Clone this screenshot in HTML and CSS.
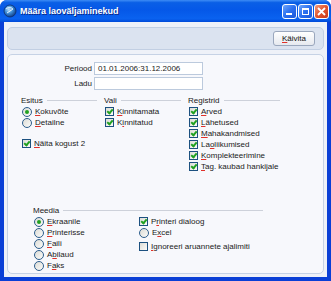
FILE: index.html
```html
<!DOCTYPE html>
<html lang="et">
<head>
  <meta charset="UTF-8">
  <title>Määra laoväljaminekud</title>
  <link rel="stylesheet" href="styles.css">
</head>
<body>
  <div class="window">
    <div class="titlebar">
      <svg class="app-icon" width="14" height="14" viewBox="0 0 14 14">
        <defs>
          <radialGradient id="globe" cx="40%" cy="35%" r="65%">
            <stop offset="0" stop-color="#bfe3ff"/>
            <stop offset="0.5" stop-color="#3f8fd8"/>
            <stop offset="1" stop-color="#123f8a"/>
          </radialGradient>
        </defs>
        <circle cx="7" cy="7" r="6" fill="url(#globe)" stroke="#0c2f6e" stroke-width="0.8"/>
        <path d="M3 5 C5 3 8 3 10 5 C8 6 6 8 4 9" fill="none" stroke="#e8f4ff" stroke-width="1"/>
      </svg>
      <span class="title">Määra laoväljaminekud</span>
      <div class="caption-buttons">
        <span class="cap-btn min"><i></i></span>
        <span class="cap-btn max"><i></i></span>
        <span class="cap-btn close">
          <svg width="9" height="9" viewBox="0 0 9 9"><path d="M1 1 L8 8 M8 1 L1 8" stroke="#fff" stroke-width="1.8"/></svg>
        </span>
      </div>
    </div>

    <div class="client">
      <div class="toolbar">
        <button class="btn"><u>K</u>äivita</button>
      </div>

      <div class="panel">
        <div class="field">
          <label>Periood</label>
          <div class="input">01.01.2006:31.12.2006</div>
        </div>
        <div class="field">
          <label>Ladu</label>
          <div class="input"></div>
        </div>

        <div class="groups">
          <div class="group">
            <div class="group-title"><span>Esitus</span></div>
            <div class="opt"><span class="radio on"></span><span><u>K</u>okuvõte</span></div>
            <div class="opt"><span class="radio"></span><span><u>D</u>etailne</span></div>
            <div class="opt spaced"><span class="check on"></span><span><u>N</u>äita kogust 2</span></div>
          </div>
          <div class="group">
            <div class="group-title"><span>Vali</span></div>
            <div class="opt"><span class="check on"></span><span><u>K</u>innitamata</span></div>
            <div class="opt"><span class="check on"></span><span>K<u>i</u>nnitatud</span></div>
          </div>
          <div class="group">
            <div class="group-title"><span>Registrid</span></div>
            <div class="opt"><span class="check on"></span><span><u>A</u>rved</span></div>
            <div class="opt"><span class="check on"></span><span><u>L</u>ähetused</span></div>
            <div class="opt"><span class="check on"></span><span><u>M</u>ahakandmised</span></div>
            <div class="opt"><span class="check on"></span><span>La<u>o</u>liikumised</span></div>
            <div class="opt"><span class="check on"></span><span><u>K</u>omplekteerimine</span></div>
            <div class="opt"><span class="check on"></span><span><u>T</u>ag. kaubad hankijale</span></div>
          </div>
        </div>

        <div class="media">
          <div class="group-title"><span>Meedia</span></div>
          <div class="media-cols">
            <div class="media-col">
              <div class="opt"><span class="radio on"></span><span><u>E</u>kraanile</span></div>
              <div class="opt"><span class="radio"></span><span><u>P</u>rinterisse</span></div>
              <div class="opt"><span class="radio"></span><span><u>F</u>aili</span></div>
              <div class="opt"><span class="radio"></span><span>A<u>b</u>ilaud</span></div>
              <div class="opt"><span class="radio"></span><span>F<u>a</u>ks</span></div>
            </div>
            <div class="media-col">
              <div class="opt"><span class="check on"></span><span>P<u>r</u>interi dialoog</span></div>
              <div class="opt"><span class="radio"></span><span>E<u>x</u>cel</span></div>
              <div class="opt spaced-sm"><span class="check"></span><span><u>I</u>gnoreeri aruannete ajalimiti</span></div>
            </div>
          </div>
        </div>
      </div>
    </div>
  </div>
</body>
</html>
```

FILE: styles.css
```css
body {
  margin: 0;
  padding: 0;
  background-color: #fff;
  font-family: 'Liberation Sans', Arial, sans-serif;
  font-size: 8px;
  color: #1a1a1a;
}

u {
  text-decoration: underline;
  text-decoration-color: #e0302a;
  text-underline-offset: 1px;
}

.window {
  width: 331px;
  height: 281px;
  display: flex;
  flex-direction: column;
  background-color: #0a3fd6;
  border-radius: 7px 7px 0 0;
  overflow: hidden;
}

/* barre de titre */
.titlebar {
  height: 22px;
  flex: none;
  display: flex;
  align-items: center;
  padding: 0 2px 0 3px;
  background: linear-gradient(to bottom, #3d8cf5 0%, #0a5fe6 12%, #0558e8 45%, #0a62f0 85%, #0049d8 100%);
}

.app-icon {
  margin-right: 3px;
}

.title {
  color: #fff;
  font-weight: bold;
  font-size: 9px;
  text-shadow: 1px 1px 0 #0b2a8a;
  flex: 1;
}

.caption-buttons {
  display: flex;
  gap: 1px;
}

.cap-btn {
  width: 15px;
  height: 15px;
  border: 1px solid #fff;
  border-radius: 3px;
  box-sizing: border-box;
  background: linear-gradient(135deg, #6fa6fb 0%, #2a6ff0 50%, #1b56d8 100%);
  display: flex;
  align-items: center;
  justify-content: center;
  position: relative;
}

.cap-btn.min i {
  width: 6px;
  height: 2px;
  background-color: #fff;
  position: absolute;
  left: 3px;
  bottom: 3px;
}

.cap-btn.max i {
  width: 5px;
  height: 4px;
  border: 1px solid #fff;
  border-top-width: 2px;
}

.cap-btn.close {
  background: linear-gradient(135deg, #f39a7c 0%, #e0552e 50%, #c8391a 100%);
}

/* zone client */
.client {
  flex: 1;
  margin: 0 4px 4px 4px;
  padding: 5px 3px 3px 3px;
  background-color: #eef1f8;
  display: flex;
  flex-direction: column;
  gap: 4px;
}

.toolbar {
  height: 23px;
  box-sizing: border-box;
  border: 1px solid #c2cfe3;
  border-radius: 5px;
  background-color: #dbe3f0;
  display: flex;
  align-items: center;
  justify-content: flex-end;
  padding-right: 8px;
}

.btn {
  width: 42px;
  height: 15px;
  padding: 0;
  font-family: inherit;
  font-size: 8px;
  color: #111;
  border: 1px solid #9aa7bd;
  border-radius: 3px;
  background: linear-gradient(to bottom, #ffffff, #e6e9ef);
}

.panel {
  flex: 1;
  box-sizing: border-box;
  border: 1px solid #c6d2e5;
  border-radius: 5px;
  background-color: #f7f8fc;
  padding-top: 7px;
}

.field {
  display: flex;
  align-items: center;
  margin-bottom: 2px;
}

.field label {
  width: 84px;
  text-align: right;
  margin-right: 2px;
}

.input {
  width: 109px;
  height: 13px;
  box-sizing: border-box;
  border: 1px solid #bccadd;
  background-color: #fff;
  padding-left: 3px;
  line-height: 11px;
}

.groups {
  display: grid;
  grid-template-columns: 76px 77px 92px;
  column-gap: 7px;
  margin-top: 4px;
  padding-left: 13px;
}

.group-title {
  height: 12px;
  display: flex;
  align-items: center;
}

.group-title::after {
  content: '';
  flex: 1;
  height: 1px;
  margin-left: 4px;
  background-color: #cdd1da;
}

.opt {
  height: 11px;
  display: flex;
  align-items: center;
  gap: 3px;
  padding-left: 1px;
  white-space: nowrap;
}

.opt.spaced {
  margin-top: 10px;
}

.opt.spaced-sm {
  margin-top: 3px;
}

.check {
  width: 9px;
  height: 9px;
  box-sizing: border-box;
  border: 1px solid #1c5180;
  background: linear-gradient(135deg, #dcdcd6, #fbfbf9);
  flex: none;
  position: relative;
}

.check.on::after {
  content: '';
  position: absolute;
  left: 2px;
  top: 0px;
  width: 2px;
  height: 4px;
  border: solid #21a121;
  border-width: 0 2px 2px 0;
  transform: rotate(40deg);
}

.radio {
  width: 10px;
  height: 10px;
  box-sizing: border-box;
  border: 1px solid #2c5d8c;
  border-radius: 50%;
  background: linear-gradient(135deg, #dcdcd6, #fbfbf9);
  flex: none;
  display: flex;
  align-items: center;
  justify-content: center;
}

.radio.on::after {
  content: '';
  width: 4px;
  height: 4px;
  border-radius: 50%;
  background-color: #21a121;
}

.media {
  width: 230px;
  margin: 32px 0 0 25px;
}

.media-cols {
  display: grid;
  grid-template-columns: 105px 1fr;
}
```
